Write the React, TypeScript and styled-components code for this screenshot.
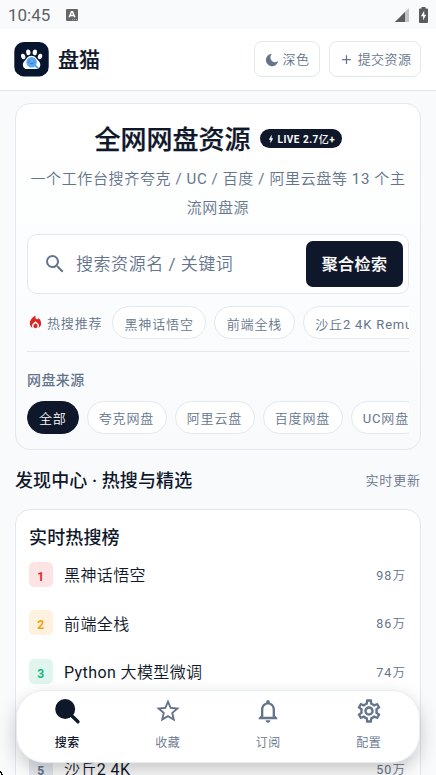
import React from 'react';
import styled, { createGlobalStyle, css } from 'styled-components';
import { MdAdd, MdBolt, MdLocalFireDepartment, MdOutlineNotifications, MdOutlineSettings, MdSearch, MdStarBorder } from 'react-icons/md';

const ink = '#0f172a';
const muted = '#64748b';
const line = '#e2e8f0';

const GlobalStyle = createGlobalStyle`
  *, *::before, *::after { box-sizing: border-box; }
  body { margin: 0; background: #f8fafc; overflow: hidden; }
  svg { display: block; flex-shrink: 0; }
`;

const Screen = styled.div`
  position: relative;
  width: 436px;
  height: 775px;
  overflow: hidden;
  background: #f8fafc;
  color: ${ink};
  font-family: Roboto, "Noto Sans CJK SC", sans-serif;
  font-weight: 350;
  white-space: nowrap;
`;

const Latin = styled.span`
  font-weight: 400;
`;

/* Latin runs keep the regular weight next to the lighter CJK text. */
const Mixed = ({ children }: { children: string }) => (
  <span>
    {children.split(/([\x21-\x7e]+)/).map((part, i) => (i % 2 ? <Latin key={i}>{part}</Latin> : part))}
  </span>
);

const StatusBar = styled.div`
  height: 29px;
  padding: 1px 8px 0 8px;
  display: flex;
  align-items: center;
  justify-content: space-between;
  color: #616161;
`;
const StatusGroup = styled.div<{ $gap: number }>`
  display: flex;
  align-items: center;
  gap: ${p => p.$gap}px;
`;
const Clock = styled.span`
  font-size: 17px;
  line-height: 20px;
  font-weight: 400;
`;

const Header = styled.header`
  height: 62px;
  padding: 0 15px 1px 14px;
  display: flex;
  align-items: center;
  background: #fff;
  border-bottom: 1px solid ${line};
`;
const Brand = styled.h1`
  margin: 2px auto 0 9px;
  font-size: 21px;
  line-height: 30px;
  font-weight: 500;
  -webkit-text-stroke: 0.2px currentColor;
`;
const HeaderButton = styled.button<{ $width: number }>`
  width: ${p => p.$width}px;
  height: 36px;
  margin-left: 9px;
  padding: 1px 0 0;
  display: flex;
  align-items: center;
  justify-content: center;
  gap: 4px;
  border: 1px solid ${line};
  border-radius: 8px;
  background: #fff;
  color: ${muted};
  font: 350 13px/20px Roboto, "Noto Sans CJK SC", sans-serif;
  letter-spacing: 0.4px;
`;

const Main = styled.main`
  padding: 12px 15px 0;
`;
const cardFrame = css`
  border: 1px solid ${line};
  border-radius: 15px;
`;
const Hero = styled.section`
  ${cardFrame}
  height: 347px;
  padding: 16px 11px 0;
  background: linear-gradient(#fff, #f8fafc);
`;
const HeroTitleRow = styled.div`
  display: flex;
  align-items: center;
  justify-content: center;
  gap: 9px;
  height: 39px;
`;
const HeroTitle = styled.h2`
  margin: 1px 0 0;
  font-size: 26px;
  line-height: 38px;
  font-weight: 500;
  -webkit-text-stroke: 0.25px currentColor;
`;
const LiveBadge = styled.span`
  width: 82px;
  height: 19px;
  margin-top: -2px;
  padding: 0 0 0 6px;
  display: flex;
  align-items: center;
  gap: 2px;
  border-radius: 10px;
  background: ${ink};
  color: #fff;
  font-size: 10px;
  font-weight: 700;
  letter-spacing: 0.5px;
`;
const BadgeUnit = styled.span`
  font-weight: 500;
`;
const Subtitle = styled.p`
  margin: 6px 0 0;
  height: 58px;
  text-align: center;
  color: ${muted};
  font-size: 15px;
  line-height: 29px;
  letter-spacing: 0.63px;
  white-space: pre-line;
`;
const SearchBox = styled.div`
  height: 60px;
  margin-top: 11px;
  padding: 0 5px 0 15px;
  display: flex;
  align-items: center;
  border: 1px solid ${line};
  border-radius: 10px;
  background: #fff;
  color: ${muted};
`;
const Placeholder = styled.span`
  margin: 0 auto 0 9px;
  font-size: 17px;
  line-height: 24px;
  letter-spacing: 0.55px;
`;
const SearchButton = styled.button`
  width: 97px;
  height: 46px;
  padding: 2px 0 0;
  border: 0;
  border-radius: 7px;
  background: ${ink};
  color: #fff;
  font: 500 16px/24px Roboto, "Noto Sans CJK SC", sans-serif;
  -webkit-text-stroke: 0.15px currentColor;
  letter-spacing: 0.4px;
`;
const ChipRow = styled.div`
  display: flex;
  align-items: center;
  gap: 8px;
  overflow: hidden;
`;
const HotRow = styled(ChipRow)`
  height: 58px;
  border-bottom: 1px solid ${line};
`;
const HotLabel = styled.span`
  width: 77px;
  flex-shrink: 0;
  display: flex;
  align-items: center;
  gap: 3px;
  color: ${muted};
  font-size: 13px;
  letter-spacing: 0.85px;
  svg { color: #dc2626; }
`;
const Chip = styled.span<{ $active?: boolean }>`
  height: 33px;
  padding: 0 ${p => (p.$active ? 11 : 11.6)}px 0 11px;
  flex-shrink: 0;
  display: flex;
  align-items: center;
  border: 1px solid ${p => (p.$active ? ink : line)};
  border-radius: 17px;
  background: ${p => (p.$active ? ink : '#fff')};
  color: ${p => (p.$active ? '#fff' : muted)};
  font-size: 13px;
  letter-spacing: 0.85px;
`;
const HotChip = styled(Chip)`
  padding: 1px 11.5px 0;
`;
const SourceTitle = styled.h3`
  margin: 18px 0 10px;
  color: ${muted};
  font-size: 14px;
  line-height: 21px;
  font-weight: 500;
  letter-spacing: 0.4px;
`;

const SectionHead = styled.div`
  height: 59px;
  display: flex;
  align-items: center;
  justify-content: space-between;
  padding-top: 2px;
`;
const SectionTitle = styled.h2`
  margin: 1px 0 0;
  font-size: 18px;
  line-height: 28px;
  font-weight: 500;
  letter-spacing: 0.1px;
`;
const SectionNote = styled.span`
  margin-top: -2px;
  color: ${muted};
  font-size: 13px;
  letter-spacing: 0.9px;
`;
const Ranking = styled.section`
  ${cardFrame}
  height: 360px;
  padding: 14px 14px 0 13px;
  background: #fff;
`;
const RankingTitle = styled.h3`
  margin: 0;
  font-size: 18px;
  line-height: 28px;
  font-weight: 500;
  letter-spacing: 0.15px;
`;
const RankRow = styled.div`
  height: 48.5px;
  display: flex;
  align-items: center;
  font-size: 16px;
  letter-spacing: 0.4px;
`;
const RankList = styled.div`
  margin-top: -2px;
`;
const RankBadge = styled.span<{ $bg: string; $fg: string }>`
  width: 24px;
  height: 25px;
  margin-right: 11px;
  padding-top: 5px;
  display: flex;
  align-items: center;
  justify-content: center;
  border-radius: 5px;
  background: ${p => p.$bg};
  color: ${p => p.$fg};
  font-size: 12px;
  font-weight: 700;
`;
const RankCount = styled.span`
  margin-left: auto;
  color: ${muted};
  font-size: 12.5px;
  letter-spacing: 1.1px;
`;

const BottomNav = styled.nav`
  position: absolute;
  left: 17px;
  top: 691px;
  width: 402px;
  height: 71px;
  display: grid;
  grid-template-columns: repeat(4, 1fr);
  border-radius: 27px;
  background: #fff;
  box-shadow: 0 0 1px 1px #e8edf4, 0 8px 20px rgba(0, 0, 0, 0.24);
`;
const NavItem = styled.a<{ $active?: boolean }>`
  padding-top: 6px;
  display: flex;
  flex-direction: column;
  align-items: center;
  gap: 9px;
  color: ${p => (p.$active ? ink : muted)};
  font-size: 12px;
  line-height: 18px;
  letter-spacing: 0.4px;
  font-weight: ${p => (p.$active ? 500 : 350)};
`;
const ScreenCorner = styled.svg`
  position: absolute;
  left: 0;
  bottom: 0;
`;

const PawLogo = () => (
  <svg width="35" height="35" viewBox="0 0 35 35">
    <rect x=".3" width="34.4" height="34.4" rx="9.5" fill="#06142d" />
    <g fill="#fff">
      <ellipse cx="9.2" cy="14.5" rx="2.1" ry="2.8" transform="rotate(-20 9.2 14.5)" />
      <ellipse cx="14.3" cy="10.3" rx="2.2" ry="2.9" transform="rotate(-5 14.3 10.3)" />
      <ellipse cx="20.8" cy="10.3" rx="2.2" ry="2.9" transform="rotate(5 20.8 10.3)" />
      <ellipse cx="26" cy="14.5" rx="2.1" ry="2.8" transform="rotate(20 26 14.5)" />
      <path d="M17.5 13.8c-3.7 0-5 3.1-7 5.200-3.200 3.500-1.500 8.100 2.800 8.100h8.600c4.300 0 6-4.600 2.800-8.100-2.100-2.100-3.500-5.200-7.200-5.200Z" />
    </g>
    <circle cx="17.6" cy="20.3" r="5.2" fill="#58a6f5" />
    <path d="m21.4 23.8 2.3 2.2" stroke="#58a6f5" strokeWidth="2" strokeLinecap="round" />
    <path d="M14.300 19.800h1m4.300 0h1m-4.600 1.400q1.600 1.200 3.200 0" fill="none" stroke="#24588f" strokeWidth=".7" />
  </svg>
);

const MoonIcon = () => (
  <svg width="14" height="14" viewBox="0 0 14 14">
    <path d="M7 .8A6.200 6.200 0 1 0 13.200 8 3.900 3.900 0 1 1 7 .8Z" fill="currentColor" />
  </svg>
);
const KeyboardNotice = () => (
  <svg width="12" height="12" viewBox="0 0 12 12">
    <rect width="12" height="12" rx="1" fill="#666" />
    <path d="m3.200 8.200 2.300-5.400h1l2.300 5.400M4.200 6.600h3.600" fill="none" stroke="#fff" strokeWidth="1.500" />
    <path d="M6 10.700h1m1 0h1m1 0h1" stroke="#ddd" strokeWidth=".7" />
  </svg>
);
const Signal = () => (
  <svg width="14" height="14" viewBox="0 0 14 14">
    <path d="M14 0v14H0Z" fill="#c4c4c4" />
    <path d="M10 4v10H0Z" fill="#5c5c5c" />
  </svg>
);
const Battery = () => (
  <svg width="9" height="16" viewBox="0 0 9 16">
    <path d="M2.500 0h4v1.500H8a1 1 0 0 1 1 1V15a1 1 0 0 1-1 1H1a1 1 0 0 1-1-1V2.500a1 1 0 0 1 1-1h1.500Z" fill="#5c5c5c" />
    <path d="M5.200 3.700 1.900 9.300h2.200v4l3.100-5.600H5.200Z" fill="#fff" />
  </svg>
);
const FilledSearch = () => (
  <svg width="28" height="28" viewBox="0 0 28 28">
    <circle cx="12.200" cy="12" r="10" fill={ink} />
    <path d="m18 18 7 6.800" stroke={ink} strokeWidth="3.300" strokeLinecap="round" />
  </svg>
);

const rows = [
  { name: '黑神话悟空', count: '98万', bg: '#fce4e4', fg: '#dc2626' },
  { name: '前端全栈', count: '86万', bg: '#fef1de', fg: '#f59e0b' },
  { name: 'Python 大模型微调', count: '74万', bg: '#e0f5ee', fg: '#10b981' },
  { name: '设计素材合集', count: '62万', bg: '#e8ecf1', fg: muted },
  { name: '沙丘2 4K', count: '50万', bg: '#e8ecf1', fg: muted },
];

export default function App() {
  return (
    <>
      <GlobalStyle />
      <Screen>
        <StatusBar>
          <StatusGroup $gap={16}><Clock>10:45</Clock><KeyboardNotice /></StatusGroup>
          <StatusGroup $gap={10}><Signal /><Battery /></StatusGroup>
        </StatusBar>
        <Header>
          <PawLogo />
          <Brand>盘猫</Brand>
          <HeaderButton $width={66}><MoonIcon />深色</HeaderButton>
          <HeaderButton $width={92}><MdAdd size={15} />提交资源</HeaderButton>
        </Header>
        <Main>
          <Hero>
            <HeroTitleRow>
              <HeroTitle>全网网盘资源</HeroTitle>
              <LiveBadge><MdBolt size={10} /><span>LIVE 2.7<BadgeUnit>亿</BadgeUnit>+</span></LiveBadge>
            </HeroTitleRow>
            <Subtitle><Mixed>{'一个工作台搜齐夸克 / UC / 百度 / 阿里云盘等 13 个主\n流网盘源'}</Mixed></Subtitle>
            <SearchBox>
              <MdSearch size={24} />
              <Placeholder><Mixed>搜索资源名 / 关键词</Mixed></Placeholder>
              <SearchButton>聚合检索</SearchButton>
            </SearchBox>
            <HotRow>
              <HotLabel><MdLocalFireDepartment size={17} />热搜推荐</HotLabel>
              <HotChip>黑神话悟空</HotChip>
              <HotChip>前端全栈</HotChip>
              <HotChip><Mixed>沙丘2 4K Remux</Mixed></HotChip>
            </HotRow>
            <SourceTitle>网盘来源</SourceTitle>
            <ChipRow>
              <Chip $active>全部</Chip>
              <Chip>夸克网盘</Chip>
              <Chip>阿里云盘</Chip>
              <Chip>百度网盘</Chip>
              <Chip><Mixed>UC网盘</Mixed></Chip>
            </ChipRow>
          </Hero>
          <SectionHead>
            <SectionTitle>发现中心 · 热搜与精选</SectionTitle>
            <SectionNote>实时更新</SectionNote>
          </SectionHead>
          <Ranking>
            <RankingTitle>实时热搜榜</RankingTitle>
            <RankList>
              {rows.map((row, i) => (
                <RankRow key={row.name}>
                  <RankBadge $bg={row.bg} $fg={row.fg}>{i + 1}</RankBadge>
                  <Mixed>{row.name}</Mixed>
                  <RankCount><Mixed>{row.count}</Mixed></RankCount>
                </RankRow>
              ))}
            </RankList>
          </Ranking>
        </Main>
        <BottomNav>
          <NavItem $active><FilledSearch />搜索</NavItem>
          <NavItem><MdStarBorder size={28} />收藏</NavItem>
          <NavItem><MdOutlineNotifications size={28} />订阅</NavItem>
          <NavItem><MdOutlineSettings size={28} />配置</NavItem>
        </BottomNav>
        <ScreenCorner width="3" height="4" viewBox="0 0 3 4"><path d="M0 0h1v1h1v2h1v1H1V2H0Z" fill="#000" /></ScreenCorner>
      </Screen>
    </>
  );
}
